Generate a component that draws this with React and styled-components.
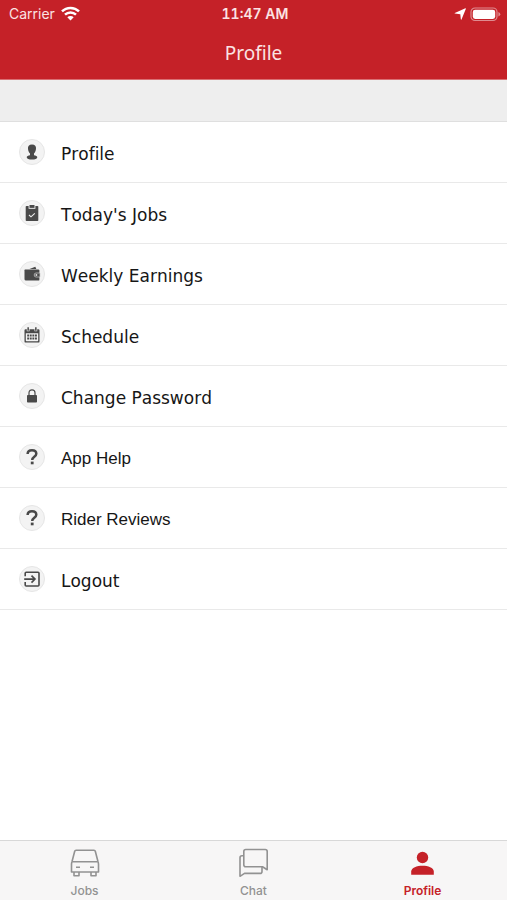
import React from "react";
import styled, { createGlobalStyle } from "styled-components";

const GlobalStyle = createGlobalStyle`
  *, *::before, *::after { box-sizing: border-box; }
  body { margin: 0; background: #fff; font-family: "DejaVu Sans", sans-serif; }
`;

const Screen = styled.div`
  min-height: 100vh;
  display: flex;
  flex-direction: column;
  background: #fff;
`;

const Header = styled.header`
  background: #c52128;
  border-bottom: 1px solid #d96f73;
  color: #fbe3e3;
`;

const StatusBar = styled.div`
  display: grid;
  grid-template-columns: 1fr auto 1fr;
  align-items: center;
  height: 28px;
  padding: 0 6px 0 9px;
  font-family: Inter, sans-serif;
  font-size: 14px;
  line-height: 20px;
`;

const StatusGroup = styled.div`
  display: flex;
  align-items: center;
  justify-content: ${(p) => (p.$end ? "flex-end" : "flex-start")};
  gap: ${(p) => (p.$end ? "4px" : "6px")};
  svg { display: block; }
`;

const Clock = styled.time`
  font-size: 14px;
  font-weight: 600;
  font-variant-numeric: tabular-nums;
`;

const Title = styled.h1`
  margin: 0;
  height: 51px;
  line-height: 50px;
  text-align: center;
  font-family: "Noto Sans", sans-serif;
  font-size: 19px;
  font-weight: 400;
`;

const SectionGap = styled.div`
  height: 42px;
  background: #eeeeee;
  border-bottom: 1px solid #dfdfdf;
`;

const Menu = styled.ul`
  flex: 1;
  margin: 0;
  padding: 0;
  list-style: none;
`;

const MenuItem = styled.li`
  border-bottom: 1px solid #e9e9e9;
`;

const MenuLink = styled.a`
  display: flex;
  align-items: center;
  gap: 16px;
  height: 60px;
  padding: 0 19px;
  color: #161616;
  text-decoration: none;
  font-family: ${(p) => (p.$plain ? '"Liberation Sans", sans-serif' : '"DejaVu Sans", sans-serif')};
  font-size: 17px;
  font-kerning: none;
  font-variant-ligatures: none;
  line-height: 24px;
`;

const MenuLabel = styled.span`
  padding-top: 3px;
`;

const IconDisc = styled.span`
  flex: none;
  width: 26px;
  height: 26px;
  display: grid;
  place-items: center;
  border-radius: 50%;
  background: #f3f3f3;
  border: 1px solid #e6e6e6;
  color: #494949;
  svg { display: block; }
`;

const TabBar = styled.nav`
  display: grid;
  grid-template-columns: repeat(3, 1fr);
  height: 60px;
  background: #f7f6f6;
  border-top: 1px solid #d8d8d8;
`;

const Tab = styled.a`
  display: flex;
  flex-direction: column;
  align-items: center;
  padding-top: 6px;
  gap: 4px;
  color: ${(p) => (p.$active ? "#c52128" : "#929292")};
  text-decoration: none;
  font-family: Inter, sans-serif;
  font-size: 12px;
  font-weight: ${(p) => (p.$active ? 600 : 500)};
  line-height: 16px;
  svg { display: block; }
`;

const Glyph = ({ size = 18, children, ...rest }) => (
  <svg width={size} height={size} viewBox={`0 0 ${size} ${size}`} fill="currentColor" aria-hidden="true" {...rest}>
    {children}
  </svg>
);

const WifiIcon = () => (
  <svg width="19" height="16" viewBox="0 0 19 16" fill="none" stroke="#fff" strokeWidth="2.5" aria-hidden="true">
    <path d="M1 5.400C5.700 .8 13.300 .8 18 5.400" />
    <path d="M4 8.700C7.100 5.800 11.900 5.800 15 8.700" />
    <path d="M6.300 11.200C8.200 9.500 10.800 9.500 12.700 11.200L9.500 14.500Z" fill="#fff" stroke="none" />
  </svg>
);

const LocationIcon = () => (
  <svg width="12" height="12" viewBox="0 0 12 12" fill="#fff" aria-hidden="true">
    <path d="M11.400 .3Q12 .2 11.800 .9L7.500 11.400Q7.100 12 6.800 11.300L6.300 6.200L.9 5.600Q.2 5.300 .8 4.900Z" />
  </svg>
);

const BatteryIcon = () => (
  <svg width="31" height="15" viewBox="0 0 31 15" aria-hidden="true">
    <rect x="1" y="1" width="26" height="12.500" rx="4" fill="none" stroke="#df8c90" strokeWidth="1.200" />
    <rect x="2.800" y="2.700" width="22.400" height="9.200" rx="2.400" fill="#fff" />
    <path d="M28.400 5Q30.300 5.800 30.300 7.300T28.400 9.600Z" fill="#df8c90" />
  </svg>
);

const PersonIcon = () => (
  <Glyph>
    <path d="M9 1.500C12 1.500 13.300 3.200 13 5.500C12.900 7.500 12.300 9.400 11 10.600V12.200C12.700 12.700 14.300 13 14.300 14.300C14.300 15.900 12 16.600 9 16.600S3.700 15.900 3.700 14.300C3.700 13 5.300 12.700 7 12.200V10.600C5.700 9.400 5.100 7.500 5 5.500C4.700 3.200 6 1.500 9 1.500Z" />
  </Glyph>
);

const ClipboardIcon = () => (
  <Glyph>
    <path d="M3.500 2H14.500Q15.300 2 15.300 2.800V16.200Q15.300 17 14.500 17H3.500Q2.700 17 2.700 16.200V2.800Q2.700 2 3.500 2Z" />
    <path d="M5.600 1.200H12.400V4.800H5.600Z" fill="#f1f1f1" />
    <path d="M6.500 1H11.500V3.900H6.500Z" />
    <path d="M6 11L8 12.800L11.800 9.400" fill="none" stroke="#eeeeee" strokeWidth="1.100" />
  </Glyph>
);

const WalletIcon = () => (
  <Glyph>
    <path d="M6.500 4L12.300 1.700L13.300 4Z" />
    <path d="M2 4.500H15.300Q16.400 4.500 16.400 5.500V14.700Q16.400 15.600 15.400 15.600H3Q1.500 15.600 1.500 14.200V5.200Q1.500 4.500 2 4.500Z" />
    <path d="M17 8H13Q11.200 8 11.200 10T13 12H17Z" stroke="#d0d0d0" strokeWidth=".7" />
    <circle cx="13.400" cy="10" r="1" fill="#dddddd" />
  </Glyph>
);

const CalendarIcon = () => (
  <Glyph>
    <path fillRule="evenodd" d="M2.600 3.200H15.400Q16.500 3.200 16.500 4.300V15.400Q16.500 16.600 15.300 16.600H2.700Q1.500 16.600 1.500 15.400V4.300Q1.500 3.200 2.600 3.200ZM2.800 7.200V14.600Q2.800 15.300 3.500 15.300H14.500Q15.200 15.300 15.200 14.600V7.200Z" />
    <path d="M3.800 1H6.500V5.200H3.800ZM11.500 1H14.200V5.200H11.500Z" fill="#f3f3f3" />
    <path d="M4.400 1.200H5.900V4.700H4.400ZM12.100 1.200H13.600V4.700H12.100Z" />
    <path d="M4.200 8.500h1.900v1.900h-1.900ZM6.800 8.500h1.900v1.900h-1.900ZM9.400 8.500h1.900v1.900h-1.900ZM12 8.500h1.900v1.900h-1.900ZM4.200 11.600h1.900v1.900h-1.900ZM6.800 11.600h1.900v1.900h-1.900ZM9.400 11.600h1.900v1.900h-1.900ZM12 11.600h1.900v1.900h-1.900Z" />
  </Glyph>
);

const LockIcon = () => (
  <Glyph>
    <rect x="4" y="8" width="10" height="7.500" rx=".8" />
    <path d="M6 8.500V5.700C6 1.800 12 1.800 12 5.700V8.500" fill="none" stroke="currentColor" strokeWidth="1.200" />
  </Glyph>
);

const HelpIcon = () => (
  <Glyph>
    <path d="M4.600 6C4.700 3.300 6.600 2.300 9 2.300C11.700 2.300 13.300 3.700 13.300 5.800C13.300 8.800 9.200 8.800 9.200 12" fill="none" stroke="currentColor" strokeWidth="2.500" />
    <rect x="7.800" y="13.600" width="2.800" height="2.700" />
  </Glyph>
);

const LogoutIcon = () => (
  <Glyph fill="none" stroke="currentColor" strokeWidth="1.600">
    <path d="M2.200 6.200V3.200Q2.200 2.200 3.200 2.200H15Q16 2.200 16 3.200V15Q16 16 15 16H3.200Q2.200 16 2.200 15V12" />
    <path d="M1.200 9.100H11.500M8.500 5.600L12 9.100L8.500 12.600" />
  </Glyph>
);

const CarIcon = () => (
  <Glyph size={32} fill="none" stroke="currentColor" strokeWidth="1.600" strokeLinejoin="round">
    <path d="M7 3.200H25Q26 3.200 26.300 4.200L28.900 14.300Q29.500 16 29.500 17.200V25H2.500V17.200Q2.500 16 3.100 14.300L5.700 4.200Q6 3.200 7 3.200Z" />
    <path d="M3.200 14.700H28.800M7 20.300H11M21 20.300H25" />
    <path d="M5 25V28.800H10V25M22 25V28.800H27V25" />
  </Glyph>
);

const ChatIcon = () => (
  <Glyph size={32} fill="none" stroke="currentColor" strokeWidth="1.600" strokeLinejoin="round">
    <path d="M7.800 2.500H27.200Q29.200 2.500 29.200 4.500V22.700L24.500 19.800H7.800Q5.800 19.800 5.800 17.800V4.500Q5.800 2.500 7.800 2.500Z" />
    <path d="M5.800 8.700H4Q2 8.700 2 10.700V29.300L6.500 26.400H22Q24 26.400 24 24.400V19.800" />
  </Glyph>
);

const UserIcon = () => (
  <Glyph size={32}>
    <circle cx="15.500" cy="10.500" r="5.700" />
    <path d="M4.200 27.800V24.500C4.200 20.500 10 18.700 15.500 18.700S26.800 20.500 26.800 24.500V27.800Z" />
  </Glyph>
);

const menuItems = [
  { label: "Profile", icon: PersonIcon },
  { label: "Today's Jobs", icon: ClipboardIcon },
  { label: "Weekly Earnings", icon: WalletIcon },
  { label: "Schedule", icon: CalendarIcon },
  { label: "Change Password", icon: LockIcon },
  { label: "App Help", icon: HelpIcon, plain: true },
  { label: "Rider Reviews", icon: HelpIcon, plain: true },
  { label: "Logout", icon: LogoutIcon },
];

const tabs = [
  { label: "Jobs", icon: CarIcon },
  { label: "Chat", icon: ChatIcon },
  { label: "Profile", icon: UserIcon, active: true },
];

export default function App() {
  return (
    <Screen>
      <GlobalStyle />
      <Header>
        <StatusBar>
          <StatusGroup>
            <span>Carrier</span>
            <WifiIcon />
          </StatusGroup>
          <Clock>11:47 AM</Clock>
          <StatusGroup $end>
            <LocationIcon />
            <BatteryIcon />
          </StatusGroup>
        </StatusBar>
        <Title>Profile</Title>
      </Header>
      <SectionGap />
      <Menu>
        {menuItems.map(({ label, icon: Icon, plain }) => (
          <MenuItem key={label}>
            <MenuLink href="#" $plain={plain}>
              <IconDisc>
                <Icon />
              </IconDisc>
              <MenuLabel>{label}</MenuLabel>
            </MenuLink>
          </MenuItem>
        ))}
      </Menu>
      <TabBar>
        {tabs.map(({ label, icon: Icon, active }) => (
          <Tab key={label} href="#" $active={active} aria-current={active ? "page" : undefined}>
            <Icon />
            {label}
          </Tab>
        ))}
      </TabBar>
    </Screen>
  );
}
